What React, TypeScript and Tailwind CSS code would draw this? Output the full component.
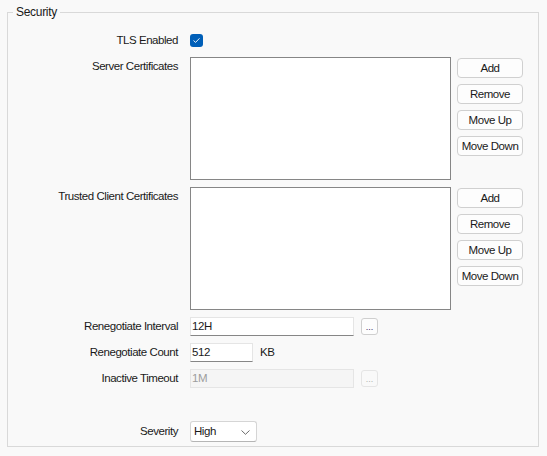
import React from "react";

const font = { fontFamily: '"Liberation Sans", Arial, sans-serif' };

function Btn({ children }: { children: React.ReactNode }) {
  return (
    <button className="h-[20px] w-[66px] rounded-[4px] border border-[#d0d0d0] bg-[#fdfdfd] pt-[1px] text-[11.5px] text-[#1a1a1a] leading-none tracking-[-0.45px]">
      {children}
    </button>
  );
}

function ListRow({ label }: { label: string }) {
  return (
    <div className="flex">
      <div className="w-[170px] h-[19px] pt-[1px] flex items-center justify-end text-[11.5px] tracking-[-0.45px] text-[#1a1a1a]">
        {label}
      </div>
      <div className="ml-[12px] w-[261px] h-[123px] border border-[#868686] bg-white" />
      <div className="ml-[6px] mt-[1px] flex flex-col gap-[6px]">
        <Btn>Add</Btn>
        <Btn>Remove</Btn>
        <Btn>Move Up</Btn>
        <Btn>Move Down</Btn>
      </div>
    </div>
  );
}

function Label({ children, h }: { children: React.ReactNode; h: string }) {
  return (
    <div className={`w-[170px] ${h} pt-[1px] flex items-center justify-end text-[11.5px] tracking-[-0.45px] text-[#1a1a1a]`}>
      {children}
    </div>
  );
}

function Ellipsis({ disabled }: { disabled?: boolean }) {
  return (
    <div
      className={
        disabled
          ? "ml-[7px] mt-[1px] w-[17px] h-[17px] rounded-[3px] border border-[#e5e5e5] bg-[#f9f9f9] flex items-end justify-center pb-[2px] text-[9px] leading-none text-[#b0b0b0]"
          : "ml-[7px] mt-[1px] w-[17px] h-[17px] rounded-[3px] border border-[#cfcfcf] bg-[#fdfdfd] flex items-end justify-center pb-[2px] text-[9px] leading-none text-[#3a2a6a]"
      }
    >
      ...
    </div>
  );
}

export default function App() {
  return (
    <div className="w-[547px] h-[456px] bg-[#f9f9f9] pt-[12px] pl-[7px]" style={font}>
      <div className="relative w-[532px] h-[435px] border border-[#d9d9d9] flex flex-col">
        <div className="absolute left-[5px] top-[-8px] px-[3px] bg-[#f9f9f9] text-[12px] leading-[14px] tracking-[-0.3px] text-[#1a1a1a]">
          Security
        </div>

        {/* TLS Enabled */}
        <div className="flex mt-[21px] items-center">
          <Label h="h-[13px]">TLS Enabled</Label>
          <div className="ml-[12px] w-[13px] h-[13px] rounded-[3px] bg-[#005fb8] flex items-center justify-center">
            <svg width="9" height="9" viewBox="0 0 9 9" fill="none">
              <path d="M1.8 4.8 L3.6 6.4 L7.2 2.6" stroke="white" strokeWidth="0.9" strokeLinecap="round" strokeLinejoin="round" />
            </svg>
          </div>
        </div>

        <div className="mt-[10px]">
          <ListRow label="Server Certificates" />
        </div>
        <div className="mt-[7px]">
          <ListRow label="Trusted Client Certificates" />
        </div>

        {/* Renegotiate Interval */}
        <div className="flex mt-[7px]">
          <Label h="h-[19px]">Renegotiate Interval</Label>
          <div className="ml-[12px] w-[164px] h-[19px] pt-[1px] bg-white border border-[#e5e5e5] border-b-[#868686] flex items-center pl-[1px] text-[11.5px] tracking-[-0.45px] text-[#1a1a1a]">
            12H
          </div>
          <Ellipsis />
        </div>

        {/* Renegotiate Count */}
        <div className="flex mt-[7px]">
          <Label h="h-[19px]">Renegotiate Count</Label>
          <div className="ml-[12px] w-[63px] h-[19px] pt-[1px] bg-white border border-[#e5e5e5] border-b-[#868686] flex items-center pl-[1px] text-[11.5px] tracking-[-0.45px] text-[#1a1a1a]">
            512
          </div>
          <div className="ml-[7px] h-[19px] pt-[1px] flex items-center text-[11.5px] tracking-[-0.45px] text-[#1a1a1a]">KB</div>
        </div>

        {/* Inactive Timeout */}
        <div className="flex mt-[7px]">
          <Label h="h-[19px]">Inactive Timeout</Label>
          <div className="ml-[12px] w-[164px] h-[19px] pt-[1px] bg-[#f5f5f5] border border-[#e5e5e5] flex items-center pl-[1px] text-[11.5px] tracking-[-0.45px] text-[#9d9d9d]">
            1M
          </div>
          <Ellipsis disabled />
        </div>

        {/* Severity */}
        <div className="flex mt-[33px]">
          <Label h="h-[21px]">Severity</Label>
          <div className="ml-[12px] w-[67px] h-[21px] pt-[1px] bg-white border border-[#d5d5d5] border-b-[#b5b5b5] rounded-[3px] flex items-center justify-between pl-[3px] pr-[6px] text-[11.5px] tracking-[-0.45px] text-[#1a1a1a]">
            <span>High</span>
            <svg width="9" height="5" viewBox="0 0 9 5" fill="none">
              <path d="M0.5 0.5 L4.5 4.3 L8.5 0.5" stroke="#5a5a5a" strokeWidth="0.9" />
            </svg>
          </div>
        </div>
      </div>
    </div>
  );
}
